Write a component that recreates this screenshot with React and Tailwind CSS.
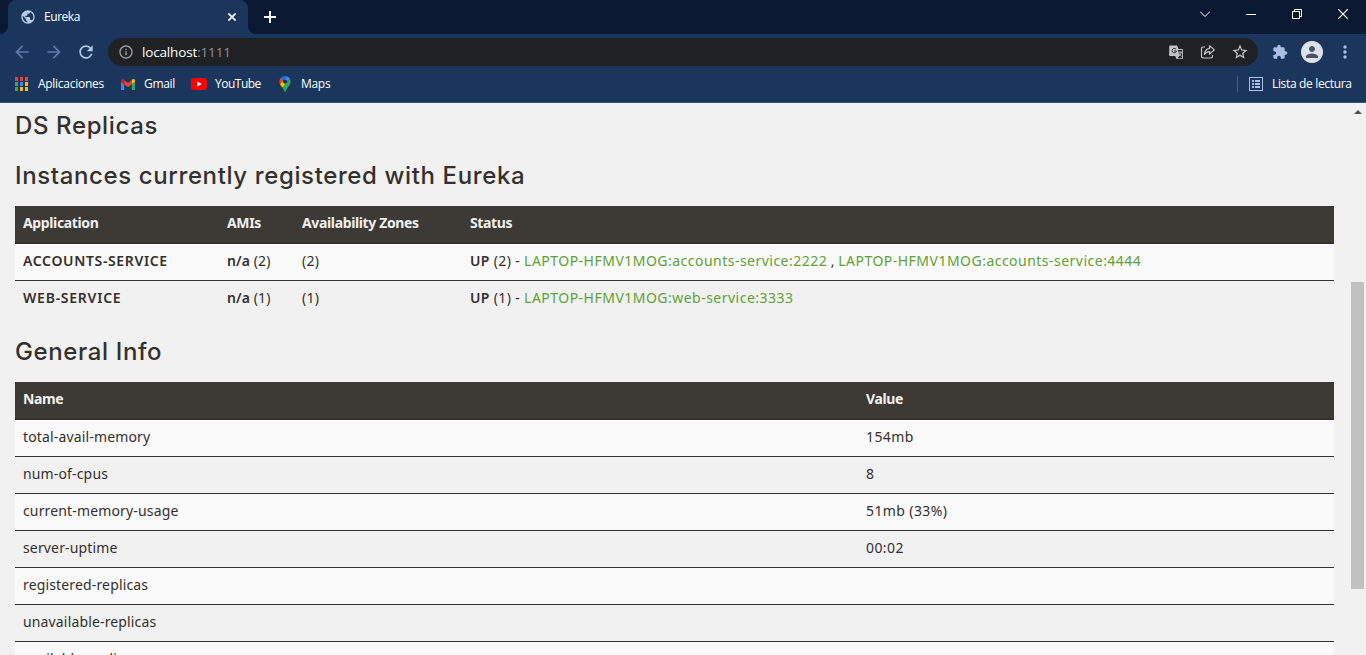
import {
  MdArrowBack,
  MdArrowForward,
  MdRefresh,
  MdInfoOutline,
  MdStarOutline,
  MdExtension,
  MdPerson,
  MdMoreVert,
  MdPublic,
} from "react-icons/md";

const uiFont = "font-['Open_Sans',sans-serif]";

function AppsIcon() {
  const colors = [
    "#ea4335", "#ea4335", "#ea4335",
    "#34a853", "#4285f4", "#fbbc04",
    "#34a853", "#fbbc04", "#fbbc04",
  ];
  return (
    <svg width="14" height="14" viewBox="0 0 14 14" shapeRendering="crispEdges">
      {colors.map((c, i) => (
        <rect key={i} x={(i % 3) * 5} y={Math.floor(i / 3) * 5} width="3" height="4" fill={c} />
      ))}
    </svg>
  );
}

function GmailIcon() {
  return (
    <svg width="14" height="11" viewBox="52 42 88 66" preserveAspectRatio="none">
      <path fill="#4285f4" d="M58 108h14V74L52 59v43c0 3.32 2.69 6 6 6" />
      <path fill="#34a853" d="M120 108h14c3.32 0 6-2.69 6-6V59l-20 15" />
      <path fill="#fbbc04" d="M120 48v26l20-15v-8c0-7.42-8.47-11.65-14.4-7.2" />
      <path fill="#ea4335" d="M72 74V48l24 18 24-18v26L96 92" />
      <path fill="#c5221f" d="M52 51v8l20 15V48l-5.6-4.2c-5.94-4.45-14.4-.22-14.4 7.2" />
    </svg>
  );
}

function YouTubeIcon() {
  return (
    <svg width="16" height="12" viewBox="0 0 16 12">
      <rect width="16" height="12" rx="3" fill="#ff0000" />
      <path d="M6.3 3.4v5.2L10.8 6z" fill="#fff" />
    </svg>
  );
}

function MapsIcon() {
  return (
    <svg width="12" height="16" viewBox="0 0 92.3 132.3">
      <path fill="#1a73e8" d="M60.2 2.2C55.8.8 51 0 46.1 0 32 0 19.3 6.4 10.8 16.5l21.8 18.3L60.2 2.2z" />
      <path fill="#ea4335" d="M10.8 16.5C4.1 24.5 0 34.9 0 46.1c0 8.7 1.7 15.7 4.6 22l28-33.3-21.8-18.3z" />
      <path fill="#4285f4" d="M46.2 28.5c9.8 0 17.7 7.9 17.7 17.7 0 4.3-1.6 8.3-4.2 11.4 0 0 13.9-16.6 27.5-32.7-5.6-10.8-15.3-19-27-22.7L32.6 34.8c3.3-3.8 8.1-6.3 13.6-6.3" />
      <path fill="#fbbc04" d="M46.2 63.8c-9.8 0-17.7-7.9-17.7-17.7 0-4.3 1.5-8.3 4.1-11.3l-28 33.3c4.8 10.6 12.8 19.2 21 29.9l34.1-40.5c-3.3 3.9-8.1 6.3-13.5 6.3" />
      <path fill="#34a853" d="M59.1 109.2c15.4-24.1 33.3-35 33.3-63 0-7.7-1.9-14.9-5.2-21.3L25.6 98c2.6 3.4 5.3 7.3 7.9 11.3 9.4 14.5 6.8 23.1 12.8 23.1s3.4-8.7 12.8-23.2" />
    </svg>
  );
}

function TranslateIcon() {
  return (
    <svg width="15" height="15" viewBox="0 0 15 15">
      <path d="M1 0.5h7l1.5 3.5h3.7c.5 0 .8.3.8.8v8.4c0 .5-.3.8-.8.8H7.5L6.2 11H1c-.5 0-.8-.3-.8-.8V1.3C.2.8.5.5 1 .5z" fill="#c3c4c7" />
      <path d="M8.9 4.9h4.2v8.3H8.4l2-2.2z" fill="#202124" />
      <path d="M6.9 4.2a2.2 2.2 0 1 0 .5 1.8H5.2" fill="none" stroke="#202124" strokeWidth="1" />
      <path d="M9.2 7.2h4M11.2 6.2v1M12.5 7.2c-.4 1.7-1.5 3-2.6 3.8M10 8.3c.5 1.4 1.5 2.5 2.8 3.2" fill="none" stroke="#c3c4c7" strokeWidth=".9" />
    </svg>
  );
}

function ShareIcon() {
  return (
    <svg width="16" height="16" viewBox="0 0 16 16" fill="none" stroke="#c3c4c7" strokeWidth="1.2" strokeLinejoin="round">
      <path d="M5 3H3.2C2.2 3 1.5 3.7 1.5 4.700v7.600c0 1 .7 1.700 1.700 1.700h7.600c1 0 1.700-.7 1.700-1.700V11" />
      <path d="M9.500 1.800 14.400 5.900 9.500 10V7.600C7.300 7.600 5.600 8.500 4.400 10.400 4.700 7.400 6.300 4.800 9.500 4.300z" />
    </svg>
  );
}

function ReadingListIcon() {
  return (
    <svg width="14" height="14" viewBox="0 0 14 14" fill="#a9bfe3" shapeRendering="crispEdges">
      <path fillRule="evenodd" d="M0 0h14v14H0zM1 1v12h12V1z" />
      <path d="M3 3h2v2H3zM6 3h5v2H6zM3 6h2v2H3zM6 6h5v2H6zM3 9h2v2H3zM6 9h5v2H6z" />
    </svg>
  );
}

function TabStrip() {
  return (
    <div className="flex h-[34px] bg-[#0a1931] pl-2">
      <div className="relative flex h-[34px] w-60 items-center rounded-t-lg bg-[#1a365d] pl-3">
        <svg className="absolute -left-2 bottom-0" width="8" height="8">
          <path d="M8 0v8H0a8 8 0 0 0 8-8z" fill="#1a365d" />
        </svg>
        <svg className="absolute -right-2 bottom-0" width="8" height="8">
          <path d="M0 0v8h8a8 8 0 0 1-8-8z" fill="#1a365d" />
        </svg>
        <MdPublic className="size-4 text-[#b9cbe8]" />
        <span className="ml-2 text-xs tracking-[-0.45px] text-white">Eureka</span>
        <svg className="mr-3 ml-auto" width="8" height="8" viewBox="0 0 8 8" stroke="#fff" strokeWidth="1.6">
          <path d="M.4.4l7.200 7.200M7.600.4L.4 7.600" />
        </svg>
      </div>
      <svg className="mt-[11px] ml-4" width="12" height="12" fill="#fff" shapeRendering="crispEdges">
        <path d="M5 0h2v12H5zM0 5h12v2H0z" />
      </svg>
      <div className="mt-[9px] mr-[18px] ml-auto flex gap-9 text-white">
        <svg width="10" height="10" fill="none" stroke="#fff" strokeWidth="1">
          <path d="M0 2.500l5 5 5-5" />
        </svg>
        <svg width="10" height="10" fill="#fff" shapeRendering="crispEdges">
          <path d="M0 5h10v1H0z" />
        </svg>
        <svg width="10" height="10" fill="none" stroke="#fff" strokeWidth="1">
          <path d="M.5 2.500h7v7h-7zM2.500 2.500v-2h7v7h-2" />
        </svg>
        <svg width="10" height="10" fill="none" stroke="#fff" strokeWidth="1.200">
          <path d="M0 0l10 10M10 0L0 10" />
        </svg>
      </div>
    </div>
  );
}

function Toolbar() {
  return (
    <div className="flex h-9 items-center bg-[#1a365d] pl-3">
      <MdArrowBack className="size-5 text-[#5f7ba5]" />
      <MdArrowForward className="ml-3 size-5 text-[#5f7ba5]" />
      <MdRefresh className="ml-3 size-5 text-[#b3c7e6]" />
      <div className="ml-3 flex h-7 w-[1150px] items-center rounded-full bg-[#202124] pl-2.5">
        <MdInfoOutline className="size-4 text-[#9aa0a6]" />
        <span className="ml-2 text-[13.5px] tracking-[-0.16px] text-white">
          localhost<span className="text-[#8e9297]">:1111</span>
        </span>
        <div className="mr-[9px] ml-auto flex items-center gap-4 text-[#c3c4c7]">
          <TranslateIcon />
          <ShareIcon />
          <MdStarOutline className="-ml-px size-[18px]" />
        </div>
      </div>
      <MdExtension className="ml-3.5 size-4 text-[#a9bfe3]" />
      <div className="ml-[13px] flex size-[22px] items-center justify-center rounded-full bg-[#dee1e6]">
        <MdPerson className="size-[18px] text-[#44546f]" />
      </div>
      <MdMoreVert className="ml-[11.5px] size-5 text-[#a9bfe3]" />
    </div>
  );
}

function BookmarksBar() {
  return (
    <div className="flex h-[33px] items-center border-b border-[#35507a] bg-[#1a365d] pb-1 pl-[15px] text-xs text-white">
      <AppsIcon />
      <span className="ml-[9px] w-[67px] tracking-[-0.28px] whitespace-nowrap">Aplicaciones</span>
      <span className="ml-4"><GmailIcon /></span>
      <span className="ml-[9px] w-8 tracking-[-0.3px] whitespace-nowrap">Gmail</span>
      <span className="ml-[15px]"><YouTubeIcon /></span>
      <span className="ml-2 w-[47px] tracking-[-0.5px] whitespace-nowrap">YouTube</span>
      <span className="ml-[17px]"><MapsIcon /></span>
      <span className="ml-[10px] tracking-[-0.3px]">Maps</span>
      <span className="ml-auto h-4 w-px bg-[#3f5e8f]" />
      <span className="mr-[9px] ml-[11px]"><ReadingListIcon /></span>
      <span className="w-[94px] tracking-[-0.34px] whitespace-nowrap">Lista de lectura</span>
    </div>
  );
}

function Heading({ children }) {
  return (
    <h1 className="font-['Inter',sans-serif] text-[24px] leading-[25px] font-medium tracking-[0.62px] whitespace-nowrap text-[#34302d]">
      {children}
    </h1>
  );
}

const headRow = "flex h-[38px] border-b-2 border-[#34302d] bg-[#3d3935] pl-2 text-[14px] leading-[33px] font-bold tracking-[-0.36px] text-[#f1f1f1]";

function Row({ children, striped, last }) {
  return (
    <div
      className={`flex h-[37px] shrink-0 pl-2 leading-[33px] whitespace-nowrap ${striped ? "bg-[#f9f9f9]" : ""} ${last ? "" : "border-b border-[#34302d]"}`}
    >
      {children}
    </div>
  );
}

function Link({ children }) {
  return <a className="tracking-[0.48px] text-[#5fa134]">{children}</a>;
}

const info = [
  ["total-avail-memory", "154mb"],
  ["num-of-cpus", "8"],
  ["current-memory-usage", "51mb (33%)"],
  ["server-uptime", "00:02"],
  ["registered-replicas", ""],
  ["unavailable-replicas", ""],
  ["available-replicas", ""],
];

function InstancesTable() {
  return (
    <div>
      <div className={headRow}>
        <div className="w-[204px]">Application</div>
        <div className="w-[75px]">AMIs</div>
        <div className="w-[168px]">Availability Zones</div>
        <div>Status</div>
      </div>
      <Row striped>
        <div className="w-[204px] font-semibold tracking-[0.65px]">ACCOUNTS-SERVICE</div>
        <div className="w-[75px] tracking-[0.1px]"><b className="font-semibold">n/a</b> (2)</div>
        <div className="w-[168px] tracking-[0.3px]">(2)</div>
        <div className="tracking-[0.35px]">
          <b className="font-semibold">UP</b> (2) - <Link>LAPTOP-HFMV1MOG:accounts-service:2222</Link>
          <span className="tracking-normal"> , </span>
          <Link>LAPTOP-HFMV1MOG:accounts-service:4444</Link>
        </div>
      </Row>
      <Row last>
        <div className="w-[204px] font-semibold tracking-[0.75px]">WEB-SERVICE</div>
        <div className="w-[75px] tracking-[0.1px]"><b className="font-semibold">n/a</b> (1)</div>
        <div className="w-[168px] tracking-[0.3px]">(1)</div>
        <div className="tracking-[0.35px]">
          <b className="font-semibold">UP</b> (1) - <Link>LAPTOP-HFMV1MOG:web-service:3333</Link>
        </div>
      </Row>
    </div>
  );
}

function InfoTable() {
  return (
    <div>
      <div className={headRow}>
        <div className="w-[843px]">Name</div>
        <div>Value</div>
      </div>
      {info.map(([name, value], i) => (
        <Row key={name} striped={i % 2 === 0}>
          <div className="w-[843px] tracking-[0.15px]">{name}</div>
          <div className="tracking-[0.4px]">{value}</div>
        </Row>
      ))}
    </div>
  );
}

export default function App() {
  return (
    <div className={`flex h-[655px] w-[1366px] flex-col overflow-hidden bg-[#f1f1f1] ${uiFont}`}>
      <TabStrip />
      <Toolbar />
      <BookmarksBar />
      <div className="flex min-h-0 flex-1 overflow-hidden">
        <main className="w-[1349px] pt-[10px] pr-[15px] pl-[15px] font-['Noto_Sans',sans-serif] text-[14px] text-[#34302d]">
          <Heading>DS Replicas</Heading>
          <div className="mt-[25px] mb-[18px]">
            <Heading>Instances currently registered with Eureka</Heading>
          </div>
          <InstancesTable />
          <div className="mt-[21px] mb-[18px]">
            <Heading>General Info</Heading>
          </div>
          <InfoTable />
        </main>
        <div className="flex w-[17px] flex-col items-center">
          <svg className="mt-[7px]" width="8" height="4">
            <path d="M4 0l4 4H0z" fill="#505050" />
          </svg>
          <div className="mt-[168px] h-[307px] w-[13px] bg-[#c1c1c1]" />
        </div>
      </div>
    </div>
  );
}
